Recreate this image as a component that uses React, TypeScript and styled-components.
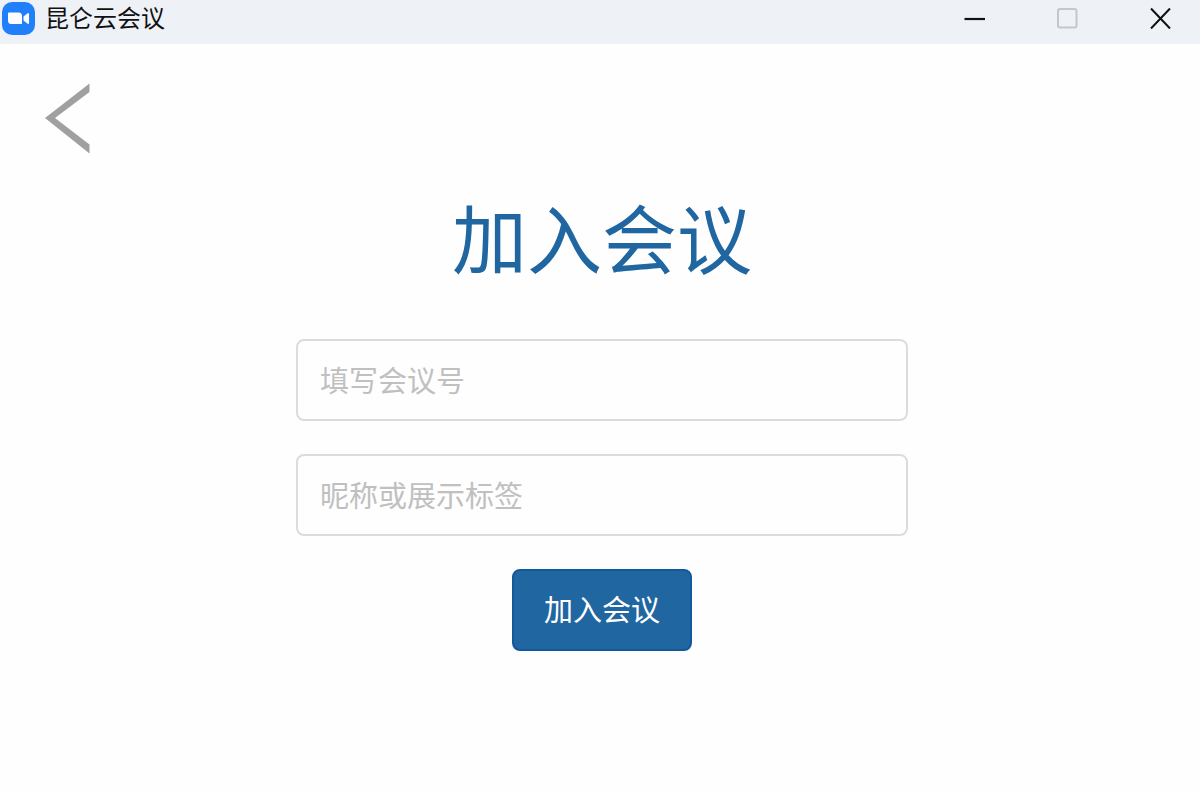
import React, { useState } from "react";
import styled, { createGlobalStyle } from "styled-components";

const GlobalStyle = createGlobalStyle`
  *, *::before, *::after { box-sizing: border-box; }
  html, body { margin: 0; background: #fefefe; }
  body, button, input {
    font-family: "Noto Sans CJK SC", sans-serif;
  }
`;

const Window = styled.div`
  display: flex;
  flex-direction: column;
  min-height: 100vh;
  background: #fefefe;
`;

const TitleBar = styled.header`
  display: flex;
  align-items: flex-start;
  justify-content: space-between;
  padding-bottom: 8px;
  background: #eef2f7;
`;

const AppName = styled.div`
  display: flex;
  align-items: flex-start;
  gap: 10px;
  padding-left: 2px;
  font-size: 24px;
  line-height: 34px;
  color: #111;
`;

const WindowControls = styled.div`
  display: flex;
  gap: 13px;
`;

const ControlButton = styled.button`
  display: flex;
  align-items: center;
  justify-content: center;
  width: 80px;
  height: 36px;
  padding: 0;
  border: 0;
  background: transparent;
  color: #111;

  &:disabled { color: #c4c6ca; }
`;

const BackButton = styled.button`
  display: flex;
  align-self: flex-start;
  margin: 38px 0 0 44px;
  padding: 0;
  border: 0;
  background: transparent;
  color: #a0a0a0;
`;

const Main = styled.main`
  display: flex;
  flex-direction: column;
  align-items: center;
  padding: 32px 0 32px 4px;
`;

const Title = styled.h1`
  margin: 0 0 53px;
  font-size: 75px;
  font-weight: 400;
  line-height: 100px;
  color: #2066a1;
`;

const Form = styled.form`
  display: flex;
  flex-direction: column;
  align-items: center;
  gap: 33px;
  width: 612px;
  max-width: 100%;
`;

const Field = styled.input`
  width: 100%;
  height: 82px;
  padding: 0 22px 2px;
  border: 2px solid #dcdcdc;
  border-radius: 8px;
  background: #fefefe;
  font-size: 29px;
  color: #333;

  &::placeholder { color: #c0c0c0; opacity: 1; }
`;

const SubmitButton = styled.button`
  height: 82px;
  padding: 0 30px 4px;
  border: 2px solid #11599a;
  border-radius: 8px;
  background: #2066a1;
  font-size: 29px;
  line-height: 40px;
  color: #fff;
`;

const CameraLogo = () => (
  <svg width="33" height="36" viewBox="0 0 33 36" aria-hidden="true">
    <g transform="translate(0 2)">
      <rect width="33" height="33" rx="10" fill="#2080fb" />
      <path
        d="M7 10.500h9.500a3.500 3.500 0 0 1 3.500 3.500v8h-10.500a3.500 3.500 0 0 1-3.500-3.500v-7a1 1 0 0 1 1-1z"
        fill="#fff"
      />
      <path d="M21.500 14.500l4.500-3.500q1 0 1 1v9q0 1-1 1l-4.500-3.500z" fill="#fff" />
    </g>
  </svg>
);

const MinimizeIcon = () => (
  <svg width="22" height="22" viewBox="0 0 22 22" aria-hidden="true">
    <path d="M1.500 12h21" stroke="currentColor" strokeWidth="2.200" />
  </svg>
);

const MaximizeIcon = () => (
  <svg width="22" height="22" viewBox="0 0 22 22" fill="none" aria-hidden="true">
    <rect x="2" y="2" width="18.500" height="18.500" rx="2" stroke="currentColor" strokeWidth="2" />
  </svg>
);

const CloseIcon = () => (
  <svg width="22" height="22" viewBox="0 0 22 22" aria-hidden="true">
    <path d="M2 1.500l19 20M21 1.500l-19 20" stroke="currentColor" strokeWidth="2" />
  </svg>
);

const BackIcon = () => (
  <svg width="48" height="72" viewBox="0 0 48 72" aria-hidden="true">
    <path d="M45.500 1.500v8.500L11 36l34.500 26.500v9L1 36z" fill="currentColor" />
  </svg>
);

export default function App() {
  const [meetingId, setMeetingId] = useState("");
  const [nickname, setNickname] = useState("");

  return (
    <>
      <GlobalStyle />
      <Window>
        <TitleBar>
          <AppName>
            <CameraLogo />
            <span>昆仑云会议</span>
          </AppName>
          <WindowControls>
            <ControlButton type="button" aria-label="最小化"><MinimizeIcon /></ControlButton>
            <ControlButton type="button" aria-label="最大化" disabled><MaximizeIcon /></ControlButton>
            <ControlButton type="button" aria-label="关闭"><CloseIcon /></ControlButton>
          </WindowControls>
        </TitleBar>
        <BackButton type="button" aria-label="返回"><BackIcon /></BackButton>
        <Main>
          <Title>加入会议</Title>
          <Form onSubmit={(event: React.FormEvent) => event.preventDefault()}>
            <Field
              aria-label="填写会议号"
              placeholder="填写会议号"
              value={meetingId}
              onChange={(event) => setMeetingId(event.target.value)}
            />
            <Field
              aria-label="昵称或展示标签"
              placeholder="昵称或展示标签"
              value={nickname}
              onChange={(event) => setNickname(event.target.value)}
            />
            <SubmitButton type="submit">加入会议</SubmitButton>
          </Form>
        </Main>
      </Window>
    </>
  );
}
